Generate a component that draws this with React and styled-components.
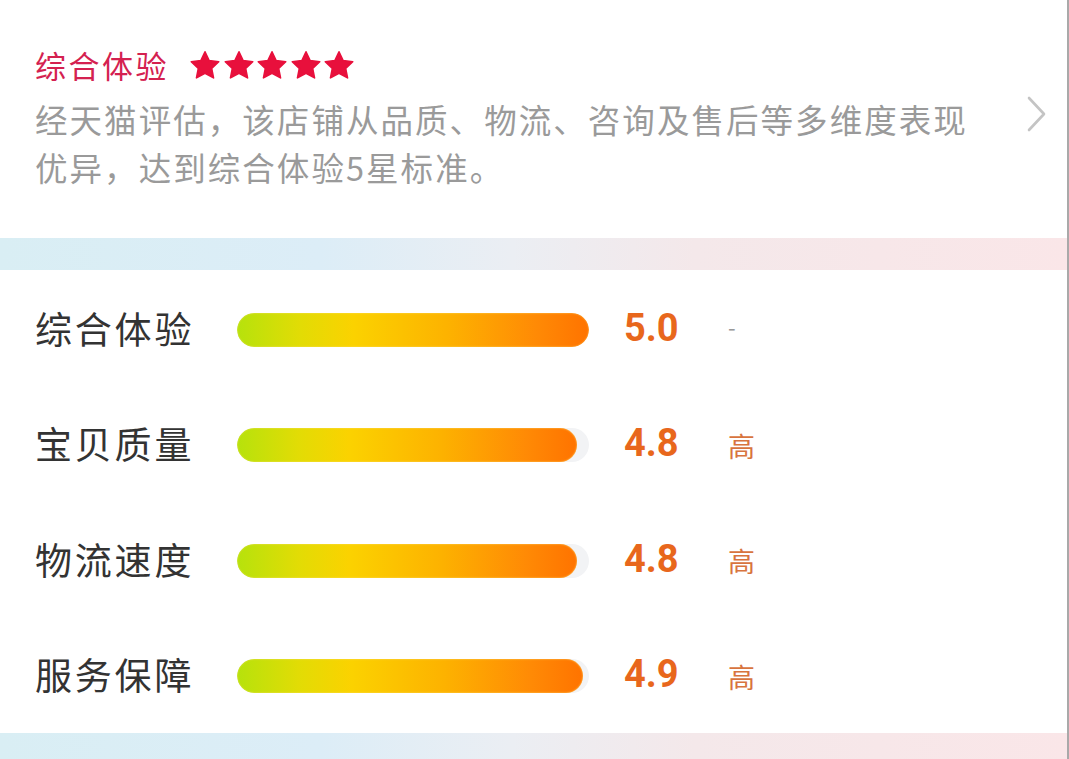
import React from 'react'
import styled, { createGlobalStyle } from 'styled-components'

const GlobalStyle = createGlobalStyle`
  html, body {
    margin: 0;
    padding: 0;
    background: #fff;
  }
  body {
    font-family: 'Noto Sans CJK SC', 'Noto Sans', sans-serif;
  }
`

const scores = [
  { label: '综合体验', value: 5.0, level: '-' },
  { label: '宝贝质量', value: 4.8, level: '高' },
  { label: '物流速度', value: 4.8, level: '高' },
  { label: '服务保障', value: 4.9, level: '高' },
]

// bar length in percent of the track
const barWidth = (v) => (v / 5) * 100 + (5 - v) * 2.5

const Star = () => (
  <svg width='32' height='31' viewBox='0 0 24 23'>
    <path
      d='M12 1.2l3.1 6.6 7.2.9-5.3 5 1.4 7.1L12 17.3l-6.4 3.5L7 13.7 1.7 8.7l7.2-.9z'
      fill='#e8103c'
      stroke='#e8103c'
      strokeWidth='1.2'
      strokeLinejoin='round'
    />
  </svg>
)

const Chevron = () => (
  <svg width='22' height='38' viewBox='0 0 22 38'>
    <path
      d='M3 3l15 16L3 35'
      fill='none'
      stroke='#c4c4c4'
      strokeWidth='2.6'
      strokeLinecap='round'
      strokeLinejoin='round'
    />
  </svg>
)

const App = () => {
  return (
    <Page>
      <GlobalStyle />
      <Summary>
        <TitleRow>
          <Title>综合体验</Title>
          <Stars>
            {[0, 1, 2, 3, 4].map((i) => (
              <Star key={i} />
            ))}
          </Stars>
        </TitleRow>
        <DescRow>
          <Desc>
            经天猫评估，该店铺从品质、物流、咨询及售后等多维度表现优异，达到综合体验5星标准。
          </Desc>
          <Arrow>
            <Chevron />
          </Arrow>
        </DescRow>
      </Summary>
      <Band />
      <List>
        {scores.map((s) => (
          <Row key={s.label}>
            <Label>{s.label}</Label>
            <Track>
              <Fill style={{ width: `${barWidth(s.value)}%` }} />
            </Track>
            <Score>{s.value.toFixed(1)}</Score>
            <Level $dash={s.level === '-'}>{s.level}</Level>
          </Row>
        ))}
      </List>
      <Band />
    </Page>
  )
}

const Page = styled.div`
  width: 1069px;
  height: 759px;
  overflow: hidden;
  background: #fff;
  border-right: 2px solid #a9a9a9;
  box-sizing: border-box;
`

const Summary = styled.section`
  padding: 36px 0 0 35px;
  height: 238px;
  box-sizing: border-box;
`

const TitleRow = styled.div`
  display: flex;
  align-items: center;
  gap: 20px;
  height: 56px;
`

const Title = styled.h2`
  margin: 0;
  font-size: 31px;
  font-weight: 400;
  color: #d42150;
  letter-spacing: 2.5px;
`

const Stars = styled.div`
  display: flex;
  gap: 1.5px;
  margin-top: 2px;
`

const DescRow = styled.div`
  display: flex;
  align-items: flex-start;
  margin-top: 3px;
`

const Desc = styled.p`
  margin: 0;
  flex-shrink: 0;
  width: 945px;
  font-size: 32.5px;
  line-height: 48px;
  color: #9a9a9a;
  letter-spacing: 2.05px;
`

const Arrow = styled.div`
  display: flex;
  padding: 0 0 0 46px;
`

const Band = styled.div`
  height: 32px;
  background: linear-gradient(
    90deg,
    #d9eef4 0%,
    #dcedf7 30%,
    #ebeef3 48%,
    #f4e8ea 65%,
    #fae6e8 100%
  );
`

const List = styled.section`
  padding: 2px 0 0 35px;
  height: 463px;
  box-sizing: border-box;
`

const Row = styled.div`
  display: grid;
  grid-template-columns: 202px 352px 139px 60px;
  align-items: center;
  height: 115.5px;
`

const Label = styled.span`
  font-size: 37px;
  color: #333;
  letter-spacing: 2.8px;
  padding-bottom: 4px;
`

const Track = styled.div`
  height: 34px;
  border-radius: 17px;
  background: #f2f3f5;
  overflow: hidden;
`

const Fill = styled.div`
  height: 100%;
  border-radius: 17px;
  background: linear-gradient(
    90deg,
    #b6e20c 0%,
    #e2dc05 18%,
    #fbd200 33%,
    #fdb200 60%,
    #ff8a05 85%,
    #ff7300 100%
  );
  box-shadow: inset 0 0 2px rgba(255, 230, 120, 0.9);
`

const Score = styled.span`
  padding-left: 35px;
  font-family: 'Roboto', 'Liberation Sans', sans-serif;
  font-weight: 700;
  font-size: 38px;
  color: #e8671c;
  padding-bottom: 4px;
`

const Level = styled.span`
  font-size: ${(p) => (p.$dash ? '22px' : '27px')};
  color: ${(p) => (p.$dash ? '#999' : '#d8743e')};
  padding-bottom: ${(p) => (p.$dash ? '8px' : '0')};
`

export default App
